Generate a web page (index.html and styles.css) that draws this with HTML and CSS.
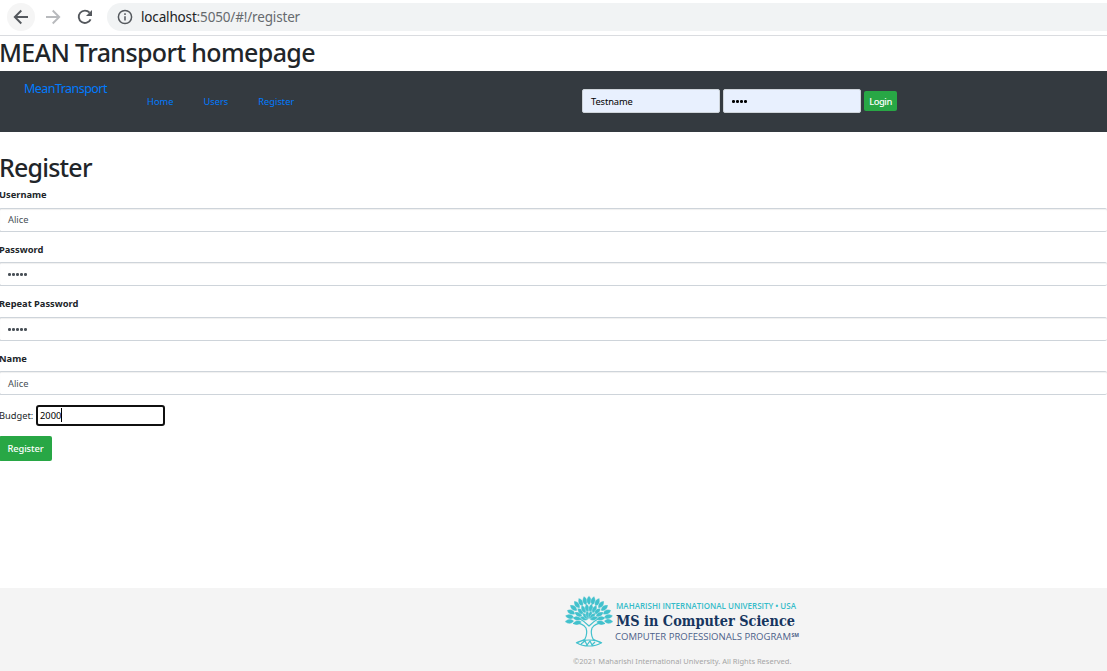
FILE: index.html
```html
<!DOCTYPE html>
<html lang="en">
<head>
<meta charset="utf-8">
<title>MEAN Transport</title>
<link rel="stylesheet" href="styles.css">
</head>
<body>
<div class="toolbar">
  <span class="tool back"><svg width="16" height="16" viewBox="0 0 16 16"><path d="M15 8H2M8.3 1.5 1.8 8l6.500 6.500" /></svg></span>
  <span class="tool forward"><svg width="16" height="16" viewBox="0 0 16 16"><path d="M1 8h13M7.700 1.500 14.200 8l-6.500 6.500" /></svg></span>
  <span class="tool reload"><svg width="16" height="16" viewBox="0 0 16 16"><path d="M13.600 10.300A6.200 6.200 0 1 1 12.600 3.700" /><path class="solid" d="M15 1v6H9z" /></svg></span>
  <div class="address">
    <svg width="16" height="16" viewBox="0 0 16 16"><circle cx="8" cy="8" r="6.600" /><path d="M8 7.200v4.300M8 4.200v1.700" /></svg>
    <span class="url"><b>localhost</b>:5050/#!/register</span>
  </div>
</div>
<h1 class="title">MEAN Transport homepage</h1>
<nav class="navbar">
  <a class="brand">MeanTransport</a>
  <div class="links"><a>Home</a><a>Users</a><a>Register</a></div>
  <div class="login">
    <div class="login-field">Testname</div>
    <div class="login-field"><span class="dots dark"><i></i><i></i><i></i><i></i></span></div>
    <button class="login-button">Login</button>
  </div>
</nav>
<main class="form">
  <h2 class="heading">Register</h2>
  <div class="group"><label>Username</label><div class="control">Alice</div></div>
  <div class="group"><label>Password</label><div class="control"><span class="dots"><i></i><i></i><i></i><i></i><i></i></span></div></div>
  <div class="group"><label>Repeat Password</label><div class="control"><span class="dots"><i></i><i></i><i></i><i></i><i></i></span></div></div>
  <div class="group"><label>Name</label><div class="control">Alice</div></div>
  <div class="budget"><span class="budget-label">Budget:</span><div class="budget-input">2000<span class="caret"></span></div></div>
  <button class="submit">Register</button>
</main>
<footer class="footer">
  <svg class="logo" width="240" height="54" viewBox="0 0 240 54">
    <defs>
      <path id="outer" d="M25 10C21.800 7 22 4 25 .8c3 3.200 3.200 6.200 0 9.200z" />
      <path id="mid" d="M25 17.500c-3-3-2.800-6 0-9 2.800 3 3 6 0 9z" />
      <path id="inner" d="M25 24c-2.600-3-2.600-5.500 0-8.500 2.600 3 2.600 5.500 0 8.500z" />
    </defs>
    <g class="leaves">
      <use href="#outer" transform="rotate(-94 25 25)"/><use href="#outer" transform="rotate(-80 25 25)"/><use href="#outer" transform="rotate(-66 25 25)"/><use href="#outer" transform="rotate(-52 25 25)"/><use href="#outer" transform="rotate(-38 25 25)"/><use href="#outer" transform="rotate(-25 25 25)"/><use href="#outer" transform="rotate(-12 25 25)"/><use href="#outer"/><use href="#outer" transform="rotate(12 25 25)"/><use href="#outer" transform="rotate(25 25 25)"/><use href="#outer" transform="rotate(38 25 25)"/><use href="#outer" transform="rotate(52 25 25)"/><use href="#outer" transform="rotate(66 25 25)"/><use href="#outer" transform="rotate(80 25 25)"/><use href="#outer" transform="rotate(94 25 25)"/>
      <use href="#mid" transform="rotate(-103 25 25)"/><use href="#mid" transform="rotate(-82 25 25)"/><use href="#mid" transform="rotate(-62 25 25)"/><use href="#mid" transform="rotate(-44 25 25)"/><use href="#mid" transform="rotate(-27 25 25)"/><use href="#mid" transform="rotate(-9 25 25)"/><use href="#mid" transform="rotate(9 25 25)"/><use href="#mid" transform="rotate(27 25 25)"/><use href="#mid" transform="rotate(44 25 25)"/><use href="#mid" transform="rotate(62 25 25)"/><use href="#mid" transform="rotate(82 25 25)"/><use href="#mid" transform="rotate(103 25 25)"/>
      <use href="#inner" transform="rotate(-72 25 25)"/><use href="#inner" transform="rotate(-42 25 25)"/><use href="#inner" transform="rotate(-14 25 25)"/><use href="#inner" transform="rotate(14 25 25)"/><use href="#inner" transform="rotate(42 25 25)"/><use href="#inner" transform="rotate(72 25 25)"/>
    </g>
    <path class="trunk" d="M9 28.500c5-1 10 .5 13 4.500 1 3 .5 8-1 11-2 2-6 2-9 4M41 28.500c-5-1-10 .5-13 4.500-1 3-.5 8 1 11 2 2 6 2 9 4M16 24c4 2 7 5 9 7 2-2 5-5 9-7M13 48c6-4 18-4 24 0-6 4-18 4-24 0M17 49l4-3 2 4 3-4 2 4 3-3" />
    <g class="logo-text">
      <text class="logo-top" x="52" y="13.500" textLength="180" lengthAdjust="spacingAndGlyphs">MAHARISHI INTERNATIONAL UNIVERSITY • USA</text>
      <text class="logo-main" x="52" y="30.500" textLength="179" lengthAdjust="spacingAndGlyphs">MS in Computer Science</text>
      <text class="logo-sub" x="51" y="45" textLength="176" lengthAdjust="spacingAndGlyphs">COMPUTER PROFESSIONALS PROGRAM</text>
      <text class="logo-mark" x="227.500" y="42" textLength="7.500" lengthAdjust="spacingAndGlyphs">SM</text>
    </g>
  </svg>
  <div class="copyright">©2021 Maharishi International University. All Rights Reserved.</div>
</footer>
</body>
</html>
```
FILE: styles.css
```css
* { box-sizing: border-box; }
body { margin: 0; height: 671px; overflow: hidden; display: flex; flex-direction: column; background: #fff; color: #212529; font-family: "Noto Sans", sans-serif; font-size: 9.3px; }
button { border: 0; padding: 0; font-family: inherit; font-weight: 500; letter-spacing: -0.1px; color: #fff; background: #28a745; }
svg { display: block; flex: none; }

.toolbar { height: 36px; flex: none; display: flex; align-items: flex-start; padding: 3px 0 0 7px; border-bottom: 1px solid #dadce0; }
.tool { width: 28px; height: 28px; display: flex; align-items: center; justify-content: center; border-radius: 50%; }
.tool svg, .address svg { fill: none; stroke: #54585d; stroke-width: 1.9; }
.back { background: #f5f5f5; }
.forward { margin-left: 4px; }
.forward svg { stroke: #b8babd; }
.reload { margin-left: 4px; }
.tool .solid { fill: #54585d; stroke: none; }
.address { flex: 1; height: 28px; margin-left: 8px; padding-left: 10px; display: flex; align-items: center; background: #f1f3f4; border-radius: 14px 0 0 14px; }
.address svg { stroke-width: 1.5; }
.url { margin-left: 8px; font-size: 13.5px; line-height: 28px; letter-spacing: -0.16px; color: #666a6e; white-space: nowrap; }
.url b { font-weight: 400; color: #202124; }

.title { margin: 0 0 0 -1px; height: 35px; flex: none; font-size: 25px; line-height: 32px; letter-spacing: -0.62px; font-weight: 500; white-space: nowrap; }
.navbar { height: 61px; flex: none; display: flex; align-items: flex-start; background: #343a40; color: #007bff; }
.brand { width: 123px; margin-left: 24px; padding-top: 8px; font-size: 12.5px; line-height: 20px; letter-spacing: -0.55px; }
.links { width: 435px; display: flex; gap: 30px; padding-top: 24px; line-height: 14px; }
.login { display: flex; align-items: center; gap: 3px; padding-top: 18px; }
.login-field { width: 138px; height: 24px; padding: 0 8px; display: flex; align-items: center; border: 1px solid #ced4da; border-radius: 2px; background: #e8f0fe; color: #000; letter-spacing: -0.1px; }
.login-button { width: 33px; height: 20px; border-radius: 2px; font-size: 9.3px; letter-spacing: -0.4px; }

.form { flex: 1; margin-left: -1px; padding-top: 20px; }
.heading { margin: 0; height: 36px; font-size: 25px; line-height: 31px; letter-spacing: -0.8px; font-weight: 500; }
.group { height: 54.6px; }
.group label { display: block; height: 19.5px; line-height: 14px; font-weight: 700; }
.control { height: 24px; padding: 0 8px; display: flex; align-items: center; border: 1px solid #ced4da; border-right: 0; border-radius: 2px; box-shadow: inset 0 1px 1px #f0f0f0; color: #495057; }
.dots { display: flex; gap: 1.4px; padding-top: 1px; color: #495057; }
.dots i { width: 2.7px; height: 2.7px; border-radius: 50%; background: currentColor; }
.dark { color: #000; }
.budget { height: 21px; margin-top: -1.4px; display: flex; align-items: center; }
.budget-label { width: 37px; }
.budget-input { width: 129px; height: 21px; padding-left: 2px; display: flex; align-items: center; border: 2px solid #101010; border-radius: 3px; color: #000; }
.caret { width: 1px; height: 14px; background: #000; }
.submit { display: block; width: 53px; height: 25px; margin-top: 10px; border-radius: 2px; font-size: 9.3px; }

.footer { height: 83px; flex: none; padding: 7px 0 0 564px; background: #f4f4f4; }
.leaves { fill: #42c1cd; stroke: #f4f4f4; stroke-width: 0.3; }
.trunk { fill: none; stroke: #42c1cd; stroke-width: 1.2; }
.logo-text { font-family: "Open Sans", sans-serif; }
.logo-top { font-size: 8.2px; font-weight: 600; fill: #36bcc9; }
.logo-main { font-family: "DejaVu Serif", serif; font-size: 14.5px; font-weight: 700; fill: #17365f; }
.logo-sub { font-size: 9.4px; font-weight: 500; fill: #4c6089; }
.logo-mark { font-size: 4.5px; font-weight: 700; fill: #4c6089; }
.copyright { margin-left: 9px; padding-top: 6px; font-size: 7.5px; line-height: 12px; color: #a5a5a5; white-space: nowrap; }
```
